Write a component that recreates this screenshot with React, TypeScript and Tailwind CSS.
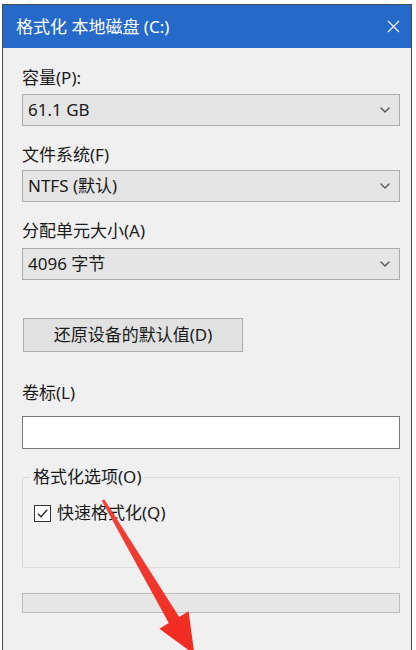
import { LuChevronDown, LuX } from "react-icons/lu";

const font = { fontFamily: '"Noto Sans", "Noto Sans CJK SC", sans-serif' };

const Select = ({ value, className }: { value: string; className?: string }) => (
  <div
    className={`h-[32px] w-[378px] flex items-center justify-between pl-[5px] pr-[6px] bg-[#e5e5e5] border border-[#adadad] text-[17px] text-[#1a1a1a] ${className ?? ""}`}
  >
    <span>{value}</span>
    <LuChevronDown className="text-[#555] text-[16px]" />
  </div>
);

export default function App() {
  return (
    <div className="relative w-[416px] h-[650px] bg-white overflow-hidden pt-[4px] pl-[2px]" style={font}>
      <div className="w-[410px] h-[646px] flex flex-col border-l border-r border-t border-[#4a4a4a]">
        {/* title bar */}
        <div className="h-[43px] bg-[#2569c9] flex items-center justify-between pl-[13px] pr-[7px] text-white">
          <span className="text-[17px] leading-none">格式化 本地磁盘 (C:)</span>
          <LuX className="text-[21px] stroke-[1.3]" />
        </div>

        {/* body */}
        <div className="flex-1 bg-[#f0f0f0] pl-[19px] pt-[20px] text-[#1a1a1a] text-[17px]">
          <div className="leading-[20px]">容量(P):</div>
          <Select value="61.1 GB" className="mt-[6px]" />

          <div className="leading-[20px] mt-[19px]">文件系统(F)</div>
          <Select value="NTFS (默认)" className="mt-[5px]" />

          <div className="leading-[20px] mt-[19px]">分配单元大小(A)</div>
          <Select value="4096 字节" className="mt-[7px]" />

          <button className="mt-[38px] w-[220px] h-[34px] ml-[1px] bg-[#e1e1e1] border border-[#adadad] text-[17px] text-[#1a1a1a]">
            还原设备的默认值(D)
          </button>

          <div className="leading-[20px] mt-[31px]">卷标(L)</div>
          <div className="mt-[13px] w-[378px] h-[33px] bg-white border border-[#7a7a7a]" />

          <fieldset className="mt-[18px] w-[378px] h-[101px] border border-[#dcdcdc] px-[11px] pt-[16px]">
            <legend className="-ml-[4px] px-[3px] text-[17px] leading-[20px]">格式化选项(O)</legend>
            <label className="flex items-center gap-[6px] leading-[20px]">
              <span className="w-[17px] h-[17px] border border-[#333] bg-white flex items-center justify-center">
                <svg width="13" height="13" viewBox="0 0 13 13">
                  <path d="M2 6.8 L5 9.8 L11.2 2.8" fill="none" stroke="#222" strokeWidth="1.3" />
                </svg>
              </span>
              快速格式化(Q)
            </label>
          </fieldset>

          <div className="mt-[25px] w-[378px] h-[20px] bg-[#e6e6e6] border border-[#bcbcbc]" />
        </div>
      </div>

      {/* red annotation arrow */}
      <svg className="absolute left-0 top-0 pointer-events-none" width="416" height="650" viewBox="0 0 416 650">
        <defs>
          <linearGradient id="arrowRed" x1="0" y1="0" x2="0" y2="1">
            <stop offset="0" stopColor="#f0443a" />
            <stop offset="1" stopColor="#f2291f" />
          </linearGradient>
        </defs>
        <polygon
          points="101.7,500.8 104.3,499.2 179.2,616.9 188.6,611.3 194.4,654.4 159.4,628.7 168.8,623.1"
          fill="url(#arrowRed)"
        />
      </svg>
    </div>
  );
}
